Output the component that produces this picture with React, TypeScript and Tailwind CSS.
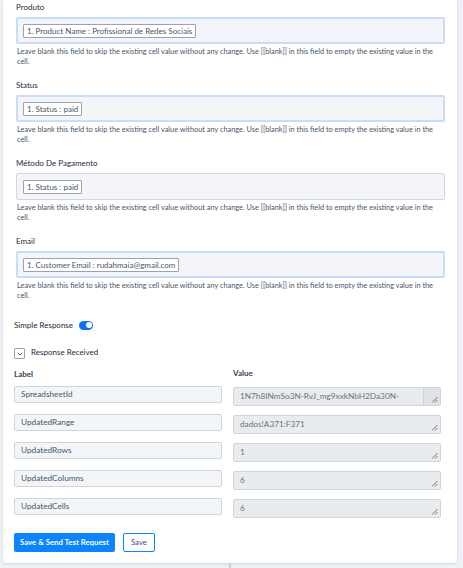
import React from "react";

type Field = { label: string; chip: string; focused: boolean };

const fields: Field[] = [
  { label: "Produto", chip: "1. Product Name : Profissional de Redes Sociais", focused: true },
  { label: "Status", chip: "1. Status : paid", focused: true },
  { label: "Método De Pagamento", chip: "1. Status : paid", focused: false },
  { label: "Email", chip: "1. Customer Email : rudahmaia@gmail.com", focused: true },
];

const rows: [string, string][] = [
  ["SpreadsheetId", "1N7h8INmSo3N-RvJ_mg9xxkNbH2Da30N-"],
  ["UpdatedRange", "dados!A371:F371"],
  ["UpdatedRows", "1"],
  ["UpdatedColumns", "6"],
  ["UpdatedCells", "6"],
];

const HELP =
  "Leave blank this field to skip the existing cell value without any change. Use [[blank]] in this field to empty the existing value in the cell.";

function Grip() {
  return (
    <svg width="7" height="7" viewBox="0 0 7 7" className="absolute right-[2px] bottom-[2px]">
      <path d="M6.5 1 L1 6.5 M6.5 4 L4 6.5" stroke="#555" strokeWidth="0.8" />
    </svg>
  );
}

function MappedField({ f }: { f: Field }) {
  return (
    <div className="flex flex-col">
      <div className="h-[12px] leading-[12px] text-[8px] text-[#1f2937]">{f.label}</div>
      <div
        className={
          f.focused
            ? "mt-[4px] h-[27px] rounded-[2px] border-2 border-[#c6def8] bg-[#f3f5f8] flex items-center px-[5px]"
            : "mt-[4px] h-[27px] rounded-[2px] border border-[#d4d8de] bg-[#f3f5f8] flex items-center px-[6px]"
        }
      >
        <span className="h-[14px] leading-[12px] border border-[#9ca3af] rounded-[1px] bg-white px-[3px] text-[8px] text-[#4b5563] whitespace-nowrap">
          {f.chip}
        </span>
      </div>
      <p className="mt-[3px] pl-[1px] text-[7.35px] leading-[10px] text-[#4a5568]">{HELP}</p>
    </div>
  );
}

export default function App() {
  return (
    <div className="min-h-[568px] bg-[#eef1f5] font-['Lato',sans-serif]">
      <div className="ml-[3px] w-[454px] bg-white rounded-b-[4px] shadow-[0_1px_3px_rgba(0,0,0,0.12)] pt-[1px] pb-[11px]">
        <div className="pl-[13px] pr-[12px] flex flex-col gap-[12px]">
          {fields.map((f) => (
            <MappedField key={f.label} f={f} />
          ))}
        </div>

        <div className="px-[11px]">
          <div className="mt-[18px] flex items-center gap-[6px]">
            <span className="text-[8px] text-[#1f2937]">Simple Response</span>
            <span className="w-[14px] h-[9px] rounded-full bg-[#0b74f0] flex items-center justify-end pr-[1.5px]">
              <span className="w-[6px] h-[6px] rounded-full bg-white" />
            </span>
          </div>

          <div className="mt-[16px] flex items-start gap-[6px]">
            <span className="mt-[1px] w-[11px] h-[11px] border border-[#9ca3af] rounded-[1px] flex items-center justify-center">
              <svg width="6" height="4" viewBox="0 0 6 4">
                <path d="M0.8 0.8 L3 3 L5.2 0.8" stroke="#4b5563" strokeWidth="0.9" fill="none" />
              </svg>
            </span>
            <span className="text-[8px] leading-[10px] text-[#1f2937]">Response Received</span>
          </div>

          <div className="mt-[8px] grid grid-cols-[208px_208px] gap-x-[11px]">
            <div className="h-[14px] leading-[14px] text-[8px] font-bold text-[#374151]">Label</div>
            <div className="h-[14px] leading-[12px] text-[8px] font-bold text-[#374151]">Value</div>
          </div>

          <div className="mt-[5px] flex flex-col gap-[8px]">
            {rows.map(([k, v]) => (
              <div key={k} className="grid grid-cols-[208px_208px] gap-x-[11px] items-start">
                <div className="h-[17px] border border-[#d1d5db] rounded-[2px] bg-[#f3f6f9] px-[6px] text-[8.25px] leading-[14px] text-[#4b5563]">
                  {k}
                </div>
                <div className="relative mt-[1px] h-[19px] border border-[#d1d5db] rounded-[2px] bg-[#e9ecef] px-[6px] text-[8.25px] leading-[17px] text-[#6b7280] overflow-hidden whitespace-nowrap">
                  {v}
                  {k === "SpreadsheetId" && (
                    <span className="absolute right-0 top-0 bottom-0 w-[17px] bg-[#dfe2e6] border-l border-[#cfd3d8]" />
                  )}
                  <Grip />
                </div>
              </div>
            ))}
          </div>

          <div className="mt-[15px] flex items-center gap-[8px]">
            <button className="h-[19px] px-[6px] rounded-[2px] bg-[#0a84ff] text-white text-[7.8px] font-bold">
              Save &amp; Send Test Request
            </button>
            <button className="h-[19px] px-[7px] rounded-[2px] border border-[#0a84ff] bg-white text-[#3b4a9a] text-[7.8px]">
              Save
            </button>
          </div>
        </div>
      </div>
      <div className="flex h-[6px]">
        <div className="w-[229px]" />
        <div className="w-[2px] bg-[#c9cdd3]" />
      </div>
    </div>
  );
}
